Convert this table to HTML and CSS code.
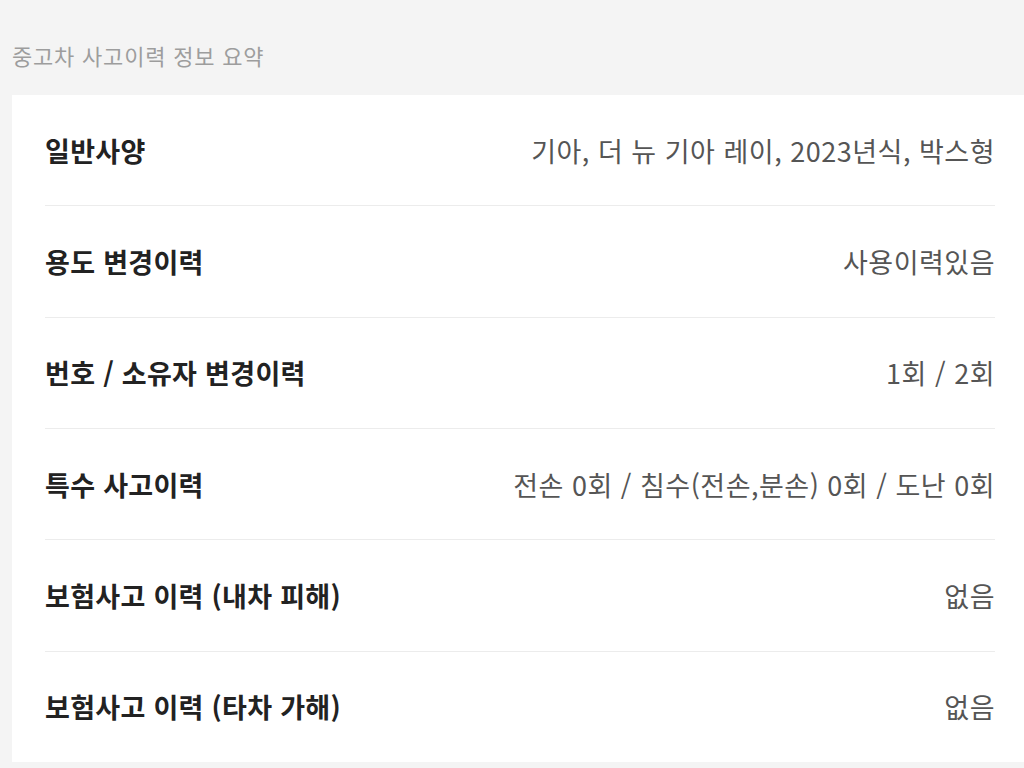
FILE: index.html
```html
<!DOCTYPE html>
<html lang="ko">
<head>
<meta charset="utf-8">
<title>중고차 사고이력 정보 요약</title>
<link rel="stylesheet" href="styles.css">
</head>
<body>
<main class="page">
  <h2 class="section-title">중고차 사고이력 정보 요약</h2>
  <section class="card">
    <div class="row"><span class="label">일반사양</span><span class="value">기아, 더 뉴 기아 레이, 2023년식, 박스형</span></div>
    <div class="row"><span class="label">용도 변경이력</span><span class="value">사용이력있음</span></div>
    <div class="row"><span class="label">번호 / 소유자 변경이력</span><span class="value">1회 / 2회</span></div>
    <div class="row"><span class="label">특수 사고이력</span><span class="value">전손 0회 / 침수(전손,분손) 0회 / 도난 0회</span></div>
    <div class="row"><span class="label">보험사고 이력 (내차 피해)</span><span class="value">없음</span></div>
    <div class="row"><span class="label">보험사고 이력 (타차 가해)</span><span class="value">없음</span></div>
  </section>
</main>
</body>
</html>
```

FILE: styles.css
```css
html, body {
  margin: 0;
  padding: 0;
  background: #f4f4f4;
}
body {
  font-family: "Noto Sans CJK KR", "Noto Sans", sans-serif;
  color: #222;
}
.page {
  display: flex;
  flex-direction: column;
  height: 768px;
}
.section-title {
  margin: 0;
  height: 95px;
  box-sizing: border-box;
  padding: 39px 0 0 12px;
  font-size: 22px;
  line-height: 32px;
  font-weight: 400;
  color: #9d9d9d;
  letter-spacing: 0.8px;
}
.card {
  margin-left: 12px;
  background: #fff;
  padding: 0 29px 0 33px;
  height: 667px;
  display: flex;
  flex-direction: column;
}
.row {
  flex: 1;
  display: flex;
  justify-content: space-between;
  align-items: center;
  border-bottom: 1px solid #ececec;
}
.row:last-child {
  border-bottom: none;
}
.label {
  font-size: 27px;
  font-weight: 700;
  color: #222;
  letter-spacing: 0.3px;
}
.value {
  font-size: 27px;
  font-weight: 400;
  color: #555;
  letter-spacing: 0.5px;
}
```
